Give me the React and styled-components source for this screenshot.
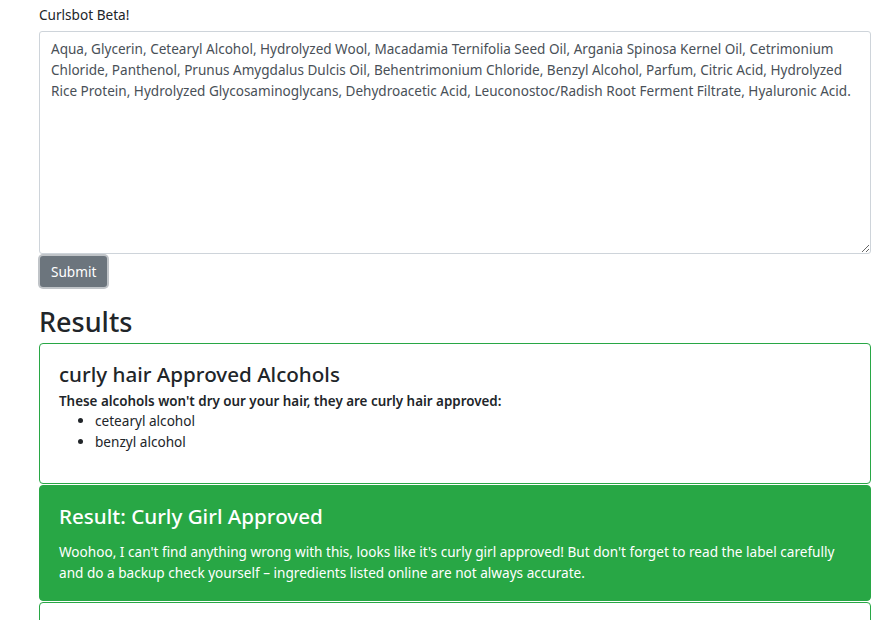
import styled, { createGlobalStyle } from "styled-components";

const ingredients = "Aqua, Glycerin, Cetearyl Alcohol, Hydrolyzed Wool, Macadamia Ternifolia Seed Oil, Argania Spinosa Kernel Oil, Cetrimonium Chloride, Panthenol, Prunus Amygdalus Dulcis Oil, Behentrimonium Chloride, Benzyl Alcohol, Parfum, Citric Acid, Hydrolyzed Rice Protein, Hydrolyzed Glycosaminoglycans, Dehydroacetic Acid, Leuconostoc/Radish Root Ferment Filtrate, Hyaluronic Acid.";

const GlobalStyle = createGlobalStyle`
    body {
        margin: 0;
        background: #fff;
        color: #212529;
        font-family: "Noto Sans", "Open Sans", sans-serif;
        font-size: 13.6px;
    }
`;

const Page = styled.div`
    padding: 6px 24px 0 39px;
    display: flex;
    flex-direction: column;
`;

const Label = styled.div`
    font-size: 13.6px;
    line-height: 18px;
    margin-bottom: 7px;
`;

const Ingredients = styled.textarea`
    box-sizing: border-box;
    width: 100%;
    height: 223px;
    padding: 7px 11px;
    border: 1px solid #ced4da;
    border-radius: 3px;
    font-family: inherit;
    font-size: 13.55px;
    line-height: 21px;
    color: #495057;
    resize: vertical;
    outline: none;
    margin: 0;
`;

const SubmitButton = styled.button`
    align-self: flex-start;
    margin: 2px 0 0 1px;
    height: 31px;
    padding: 0 11px;
    border: none;
    border-radius: 3px;
    background: #6c757d;
    color: #fff;
    font-family: inherit;
    font-size: 13.6px;
    line-height: 29px;
    box-shadow: 0 0 0 2px rgba(130, 138, 145, 0.5);
`;

const Heading = styled.h2`
    margin: 19px 0 5px;
    font-size: 27px;
    font-weight: 500;
    line-height: 32px;
`;

const Card = styled.div`
    box-sizing: border-box;
    border: 1px solid #28a745;
    border-radius: 4px;
    background: ${p => p.$filled ? "#28a745" : "#fff"};
    color: ${p => p.$filled ? "#fff" : "#212529"};
    padding: 16px 19px 16px;
    min-height: ${p => p.$minHeight || 0}px;
    margin-bottom: 1px;
`;

const CardTitle = styled.h3`
    margin: 0 0 ${p => p.$gap}px;
    font-size: 20.6px;
    font-weight: 500;
    line-height: 28px;
`;

const Lead = styled.div`
    font-weight: 600;
    font-size: 13.4px;
    line-height: 17px;
`;

const List = styled.ul`
    margin: 0;
    padding-left: 36px;
    font-size: 13.6px;
    line-height: 21px;
`;

const Text = styled.p`
    margin: 0;
    font-size: 13.6px;
    line-height: 21px;
`;

export default function App() {
    return (
        <>
            <GlobalStyle />
            <Page>
                <Label>Curlsbot Beta!</Label>
                <Ingredients defaultValue={ingredients} spellCheck />
                <SubmitButton>Submit</SubmitButton>
                <Heading>Results</Heading>
                <Card $minHeight={141}>
                    <CardTitle $gap={5}>curly hair Approved Alcohols</CardTitle>
                    <Lead>These alcohols won't dry our your hair, they are curly hair approved:</Lead>
                    <List>
                        <li>cetearyl alcohol</li>
                        <li>benzyl alcohol</li>
                    </List>
                </Card>
                <Card $filled $minHeight={116}>
                    <CardTitle $gap={11}>Result: Curly Girl Approved</CardTitle>
                    <Text>Woohoo, I can't find anything wrong with this, looks like it's curly girl approved! But don't forget to read the label carefully and do a backup check yourself – ingredients listed online are not always accurate.</Text>
                </Card>
                <Card $minHeight={60} />
            </Page>
        </>
    );
}
